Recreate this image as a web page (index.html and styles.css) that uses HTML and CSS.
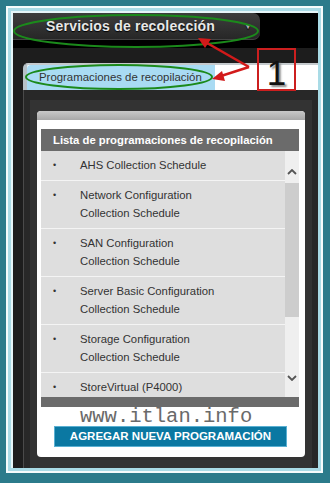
FILE: index.html
```html
<!DOCTYPE html>
<html lang="es">
<head>
    <meta charset="UTF-8">
    <meta name="viewport" content="width=device-width, initial-scale=1.0">
    <title>Servicios de recolección</title>
    <link rel="stylesheet" href="styles.css">
</head>
<body>
    <div class="frame">
        <div class="screen">
            <div class="topbar">
                <div class="svc-tab">
                    <span>Servicios de recolección</span>
                    <span class="caret">&#9662;</span>
                </div>
            </div>

            <div class="tabs">
                <div class="tab active">Programaciones de recopilación</div>
            </div>

            <div class="panel">
                <div class="panel-inner">
                    <div class="card">
                        <div class="card-top"></div>
                        <div class="list-wrap">
                            <div class="list-head">Lista de programaciones de recopilación</div>
                            <div class="list-body">
                                <ul class="items">
                                    <li><span class="bullet">&bull;</span><span>AHS Collection Schedule</span></li>
                                    <li><span class="bullet">&bull;</span><span>Network Configuration<br>Collection Schedule</span></li>
                                    <li><span class="bullet">&bull;</span><span>SAN Configuration<br>Collection Schedule</span></li>
                                    <li><span class="bullet">&bull;</span><span>Server Basic Configuration<br>Collection Schedule</span></li>
                                    <li><span class="bullet">&bull;</span><span>Storage Configuration<br>Collection Schedule</span></li>
                                    <li><span class="bullet">&bull;</span><span>StoreVirtual (P4000)</span></li>
                                </ul>
                                <div class="scroll">
                                    <div class="scroll-up">
                                        <svg width="10" height="6" viewBox="0 0 10 6"><polyline points="1,5 5,1 9,5" fill="none" stroke="#555" stroke-width="1.8"/></svg>
                                    </div>
                                    <div class="thumb"></div>
                                    <div class="scroll-down">
                                        <svg width="10" height="6" viewBox="0 0 10 6"><polyline points="1,1 5,5 9,1" fill="none" stroke="#555" stroke-width="1.8"/></svg>
                                    </div>
                                </div>
                            </div>
                            <div class="list-foot"></div>
                        </div>
                        <div class="watermark">www.itlan.info</div>
                        <div class="btn">Agregar nueva programación</div>
                    </div>
                </div>
            </div>
        </div>
    </div>

    <!-- anotaciones -->
    <svg class="marks" width="330" height="483" viewBox="0 0 330 483">
        <ellipse cx="136" cy="31" rx="122" ry="16" fill="none" stroke="#1b8a1b" stroke-width="2"/>
        <ellipse cx="119" cy="77" rx="93" ry="12" fill="none" stroke="#1b8a1b" stroke-width="2"/>
        <line x1="249" y1="67" x2="207" y2="43" stroke="#d21a1a" stroke-width="2.5"/>
        <polygon points="198,38 211,39 205,48" fill="#d21a1a"/>
        <line x1="249" y1="67" x2="221" y2="76" stroke="#d21a1a" stroke-width="2.5"/>
        <polygon points="212,79 222,71 225,81" fill="#d21a1a"/>
    </svg>
    <div class="num-box">1</div>
</body>
</html>
```

FILE: styles.css
```css
body {
    margin: 0;
    padding: 0;
    width: 330px;
    height: 483px;
    background-color: #2b7b8b;
    font-family: 'Liberation Sans', Arial, sans-serif;
    position: relative;
    overflow: hidden;
}
.frame {
    width: 317px;
    height: 467px;
    margin: 6px 0 0 6px;
    box-sizing: border-box;
    border: 2px solid #f4fbfc;
    padding: 3px;
    background-color: #a9dbe6;
}
.screen {
    height: 100%;
    box-sizing: border-box;
    border-left: 2px solid #e6f5f8;
    border-top: 2px solid #e6f5f8;
    background-color: #1d1d1d;
    display: flex;
    flex-direction: column;
}
.topbar {
    height: 35px;
    background-color: #000;
    flex-shrink: 0;
}
.svc-tab {
    width: 247px;
    height: 27px;
    box-sizing: border-box;
    background: linear-gradient(#3d3d3d, #272727);
    border-radius: 0 7px 7px 0;
    border-bottom: 1px solid #444;
    display: flex;
    justify-content: space-between;
    align-items: center;
    padding: 0 10px 0 33px;
    color: #e8e8e8;
    font-weight: bold;
    font-size: 14px;
    letter-spacing: 0.2px;
    text-shadow: 0 1px 1px #000;
}
.caret {
    font-size: 8px;
    color: #aaa;
}
.tabs {
    margin: 15px 0 0 10px;
    height: 27px;
    box-sizing: border-box;
    background-color: #fff;
    border-left: 4px solid #b7c2c8;
    border-top: 2px solid #c5cacd;
    border-radius: 5px 0 0 0;
    display: flex;
    flex-shrink: 0;
}
.tab {
    font-size: 11.4px;
    color: #333;
    line-height: 25px;
}
.tab.active {
    width: 188px;
    box-sizing: border-box;
    padding-left: 12px;
    background-color: #a9dbf3;
    border-radius: 4px 0 0 0;
}
.panel {
    flex: 1;
    margin-left: 10px;
    background-color: #282828;
    border-left: 1px solid #4a4a4a;
    padding: 10px 6px 0 6px;
    display: flex;
    flex-direction: column;
}
.panel-inner {
    flex: 1;
    background-color: #333;
    padding: 11px 7px 0 7px;
}
.card {
    background-color: #fff;
    border-radius: 4px;
    overflow: hidden;
    padding-bottom: 10px;
}
.card-top {
    height: 9px;
    background: linear-gradient(#c8c8c8, #a8a8a8);
}
.list-wrap {
    padding: 9px 6px 0 4px;
}
.list-head {
    height: 22px;
    line-height: 22px;
    background-color: #6b6b6b;
    color: #fff;
    font-weight: bold;
    font-size: 11.3px;
    padding-left: 12px;
}
.list-body {
    height: 246px;
    display: flex;
}
.items {
    flex: 1;
    margin: 0;
    padding: 0;
    list-style: none;
    background-color: #dedede;
    overflow: hidden;
}
.items li {
    display: flex;
    padding: 5px 0 6px 0;
    border-bottom: 1px solid #f4f4f4;
    font-size: 11.3px;
    line-height: 18px;
    color: #333;
}
.bullet {
    width: 27px;
    padding-left: 12px;
    flex-shrink: 0;
    font-size: 9px;
}
.scroll {
    width: 14px;
    background-color: #efefef;
    display: flex;
    flex-direction: column;
}
.scroll-up {
    height: 32px;
    box-sizing: border-box;
    padding-top: 18px;
    text-align: center;
}
.scroll-up svg,
.scroll-down svg {
    display: block;
    margin: 0 auto;
}
.thumb {
    height: 134px;
    background-color: #cdcdcd;
}
.scroll-down {
    margin-top: auto;
    height: 29px;
    box-sizing: border-box;
    padding-top: 7px;
}
.list-foot {
    height: 10px;
    background-color: #6b6b6b;
}
.watermark {
    height: 19px;
    line-height: 19px;
    padding-left: 43px;
    font-family: 'Liberation Mono', 'Courier New', monospace;
    font-size: 20.5px;
    color: #6a6a6a;
    white-space: nowrap;
}
.btn {
    margin-left: 17px;
    width: 233px;
    height: 21px;
    box-sizing: border-box;
    background-color: #0b78a2;
    border: 1px solid #5ab0d2;
    color: #fff;
    font-weight: bold;
    font-size: 11.5px;
    line-height: 19px;
    text-align: center;
    text-transform: uppercase;
}
.marks {
    position: absolute;
    left: 0;
    top: 0;
    pointer-events: none;
}
.num-box {
    position: absolute;
    left: 257px;
    top: 48px;
    width: 39px;
    height: 43px;
    box-sizing: border-box;
    border: 2px solid #cc1f1f;
    padding-top: 3px;
    text-align: center;
    font-size: 35px;
    line-height: 39px;
    color: #111;
    text-shadow: 2px 2px 2px #888;
}
```
